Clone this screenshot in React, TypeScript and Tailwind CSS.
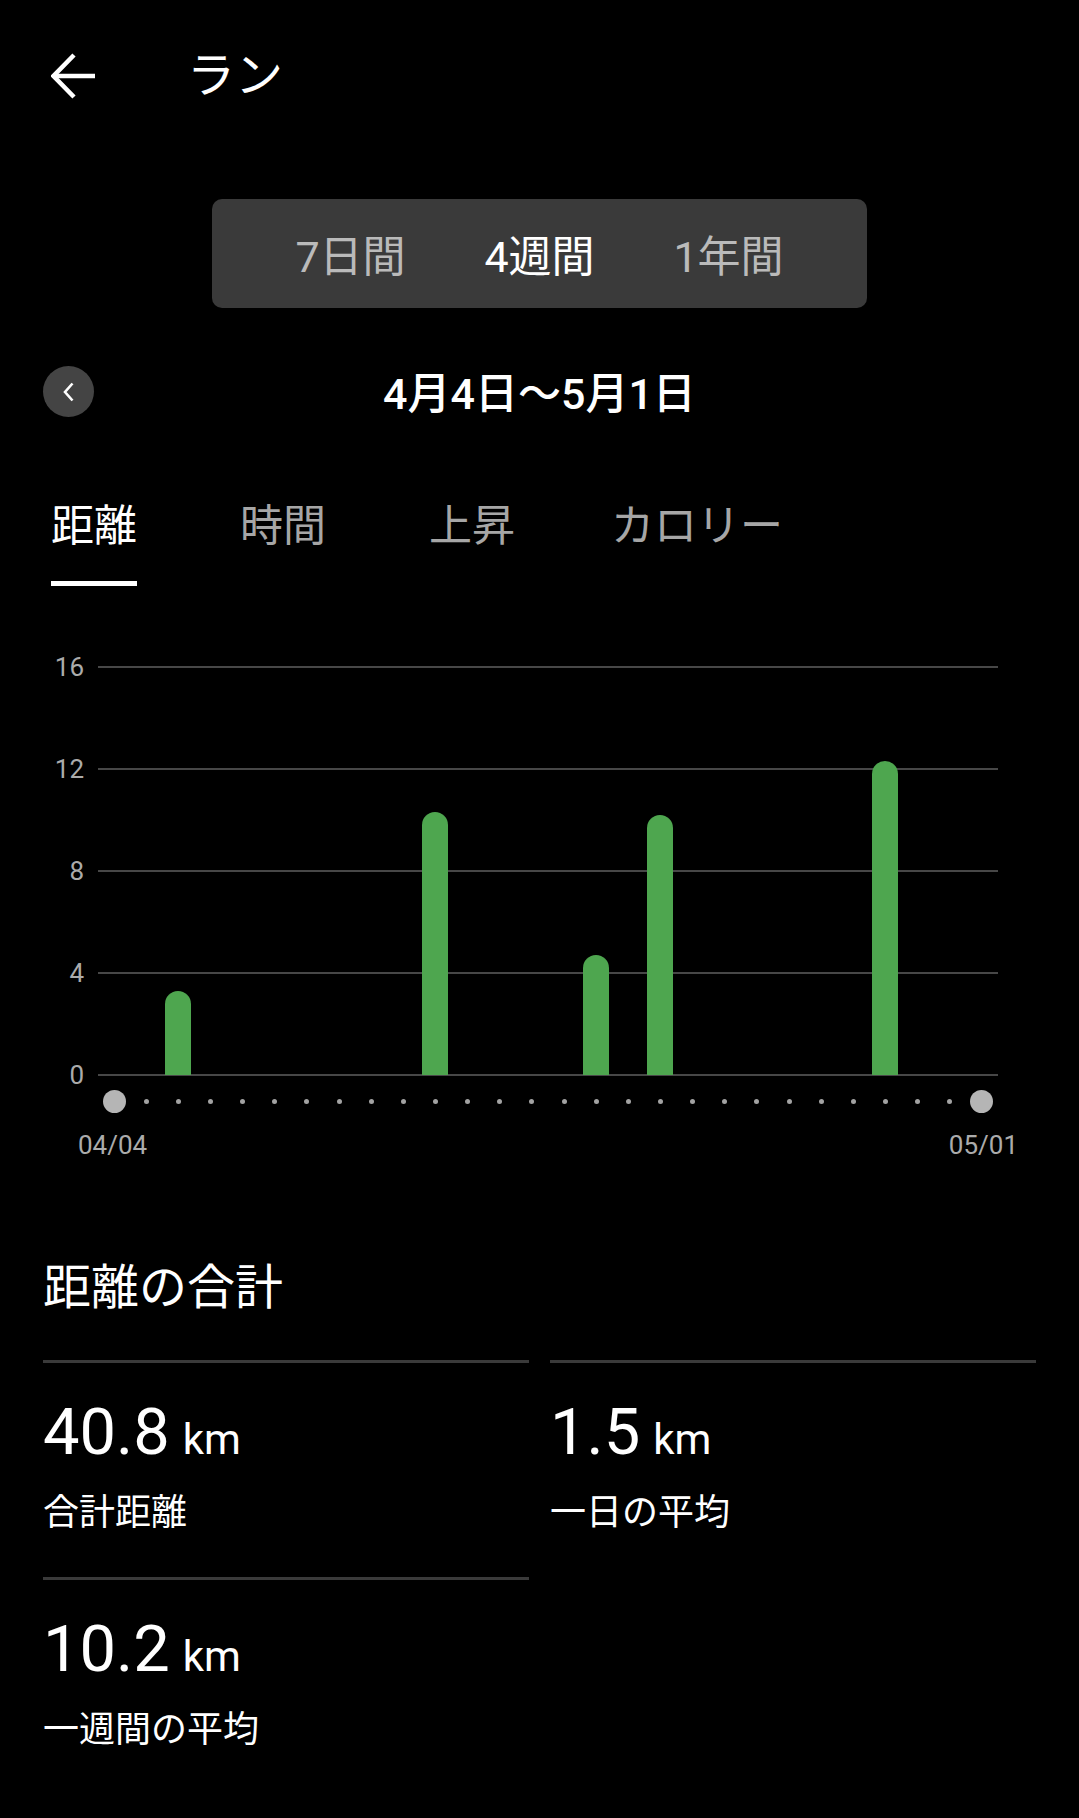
import React from 'react';

const FONT = "font-['Roboto','Noto_Sans_CJK_JP',sans-serif]";

// distance per day, 28 days from 04/04 to 05/01
const days: number[] = Array.from({ length: 28 }, () => 0);
days[2] = 3.3;
days[10] = 10.3;
days[15] = 4.7;
days[17] = 10.2;
days[24] = 12.3;

const PLOT_H = 408;

function BackArrow() {
  return (
    <svg width="44" height="46" viewBox="0 0 44 46" fill="none" stroke="white" strokeWidth="4.5">
      <path d="M44 23H4" />
      <path d="M23 2L2.5 23L23 44" />
    </svg>
  );
}

function Stat({ value, label }: { value: string; label: string }) {
  return (
    <div className="border-t-[3px] border-[#3a3a3a] pt-[32px] pb-[42px]">
      <div className="flex items-baseline leading-[74px] text-white">
        <span className="text-[65px]">{value}</span>
        <span className="text-[42px] ml-[13px]">km</span>
      </div>
      <p className="mt-[14px] text-[36px] leading-[44px] text-white">{label}</p>
    </div>
  );
}

export default function App() {
  const tabs = [
    { label: '距離', cls: 'ml-0' },
    { label: '時間', cls: 'ml-[103px]' },
    { label: '上昇', cls: 'ml-[103px]' },
    { label: 'カロリー', cls: 'ml-[96px]' },
  ];
  const ranges = ['7日間', '4週間', '1年間'];
  const ticks = [16, 12, 8, 4, 0];

  return (
    <div className={`w-[1079px] min-h-[1818px] bg-black text-white pt-[54px] ${FONT}`}>
      {/* ── Header ─────────────────────────────── */}
      <div className="flex items-center h-[44px] pl-[51px]">
        <BackArrow />
        <h1 className="ml-[92px] text-[48px] leading-[44px] font-normal text-white">ラン</h1>
      </div>

      {/* ── Range selector ─────────────────────── */}
      <div className="mx-auto mt-[101px] w-[655px] h-[109px] pt-[7px] rounded-[10px] bg-[#3a3a3a] flex items-center justify-center">
        {ranges.map((r, i) => (
          <div
            key={r}
            className={`w-[189px] text-center text-[43px] leading-[52px] ${i === 1 ? 'text-white' : 'text-[#bababa]'}`}
          >
            {r}
          </div>
        ))}
      </div>

      {/* ── Date row ───────────────────────────── */}
      <div className="flex items-center mt-[58px] h-[51px] px-[43px]">
        <button className="w-[51px] h-[51px] rounded-full bg-[#444444] flex items-center justify-center">
          <svg width="14" height="22" viewBox="0 0 14 22" fill="none" stroke="white" strokeWidth="2.6">
            <path d="M10.5 2.5L3 11L10.5 19.5" />
          </svg>
        </button>
        <div className="flex-1 pt-[5px] text-center text-[43px] leading-[52px] font-medium">4月4日～5月1日</div>
        <div className="w-[51px]" />
      </div>

      {/* ── Metric tabs ────────────────────────── */}
      <div className="flex mt-[83px] pl-[51px]">
        {tabs.map((t, i) => (
          <div key={t.label} className={`flex flex-col ${t.cls}`}>
            <span className={`text-[43px] leading-[52px] ${i === 0 ? 'text-white' : 'text-[#a6a6a6]'}`}>{t.label}</span>
            <div className={`mt-[29px] h-[5px] ${i === 0 ? 'bg-white' : 'bg-transparent'}`} />
          </div>
        ))}
      </div>

      {/* ── Chart ──────────────────────────────── */}
      <div className="relative mt-[66px]">
        <div className="flex flex-col gap-[72px]">
          {ticks.map(t => (
            <div key={t} className="flex items-center h-[30px]">
              <span className="w-[84px] text-right text-[26px] leading-[30px] text-[#ababab]">{t}</span>
              <div className="ml-[14px] w-[900px] h-[2px] bg-[#474747]" />
            </div>
          ))}
        </div>

        {/* bars over the grid */}
        <div className="absolute left-[98px] top-[15px] w-[900px] h-[408px] grid grid-cols-[repeat(28,minmax(0,1fr))] items-end">
          {days.map((v, i) => (
            <div key={i} className="flex justify-center items-end h-full">
              {v > 0 && (
                <div
                  className="w-[26px] rounded-t-full bg-[#4ea64f]"
                  style={{ height: `${(v / 16) * PLOT_H}px` }}
                />
              )}
            </div>
          ))}
        </div>

        {/* day dots */}
        <div className="ml-[98px] w-[900px] h-[23px] grid grid-cols-[repeat(28,minmax(0,1fr))] items-center">
          {days.map((_, i) => (
            <div key={i} className="flex justify-center">
              {i === 0 || i === 27 ? (
                <div className="w-[23px] h-[23px] rounded-full bg-[#b5b5b5]" />
              ) : (
                <div className="w-[5px] h-[5px] rounded-full bg-[#a3a3a3]" />
              )}
            </div>
          ))}
        </div>

        <div className="mt-[17px] ml-[78px] w-[940px] flex justify-between text-[26px] leading-[30px] text-[#ababab]">
          <span>04/04</span>
          <span>05/01</span>
        </div>
      </div>

      {/* ── Totals ─────────────────────────────── */}
      <h2 className="mt-[100px] ml-[43px] text-[48px] leading-[56px] font-normal">距離の合計</h2>

      <div className="mt-[44px] px-[43px] grid grid-cols-2 gap-x-[21px]">
        <Stat value="40.8" label="合計距離" />
        <Stat value="1.5" label="一日の平均" />
        <Stat value="10.2" label="一週間の平均" />
      </div>
    </div>
  );
}
